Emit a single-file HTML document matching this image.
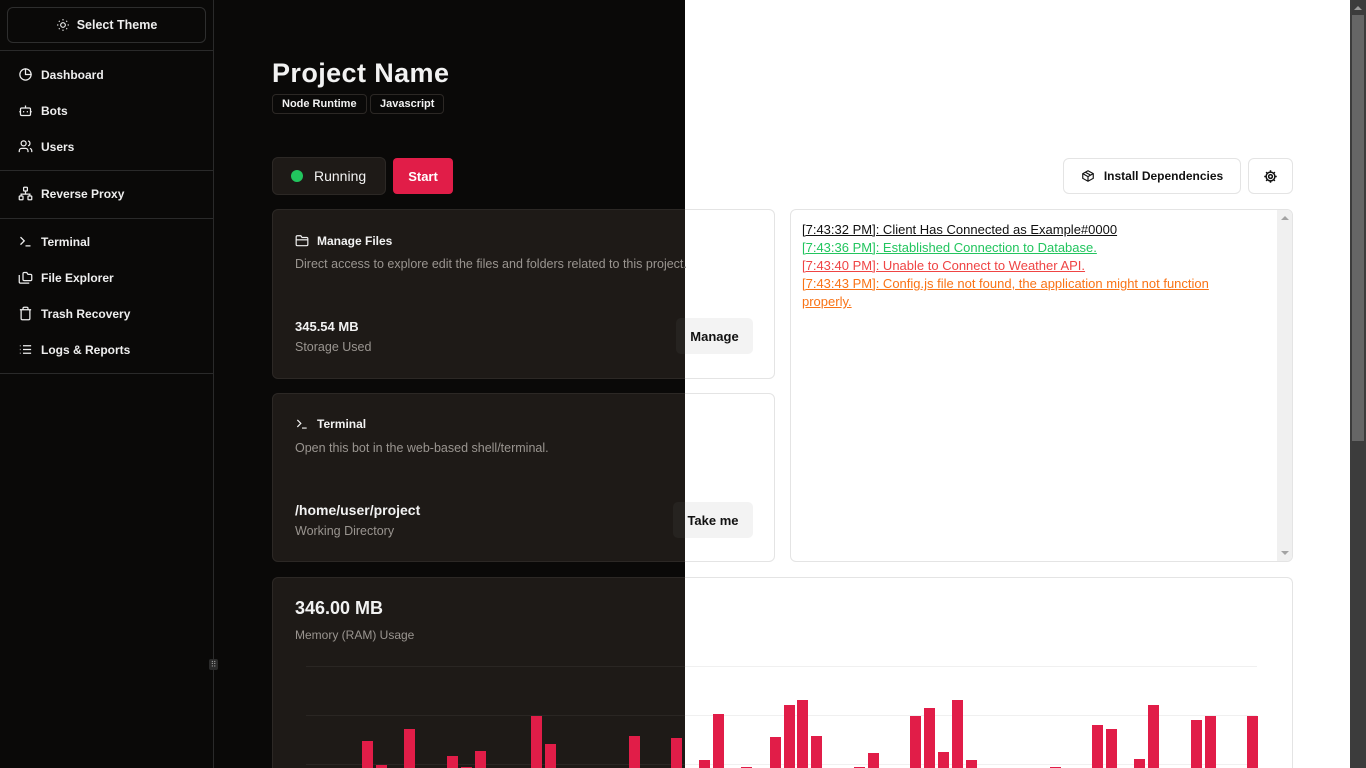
<!DOCTYPE html>
<html><head><meta charset="utf-8">
<style>
*{box-sizing:border-box;margin:0;padding:0}
html{overflow:hidden;height:768px;width:1366px}
body{width:1366px;height:768px;overflow:hidden;font-family:"Liberation Sans",sans-serif;position:relative;background:#0a0908}
.layer{position:absolute;left:0;top:0;width:1366px;height:768px;overflow:hidden}
.dark{background:#0a0908;color:#f2f2f2;--card:#1e1a17;--bd:#2c2825;--mut:#9a9590;--btn:#262320;--grid:#2a2623;--badge:#0a0908}
.light{background:#fff;color:#111;clip-path:inset(0 16px 0 685px);--card:#fff;--bd:#e4e4e4;--mut:#6b6b6b;--btn:#f3f3f3;--grid:#f0f0f0;--badge:#fff}
.a{position:absolute}
.box{position:absolute;border:1px solid var(--bd);border-radius:6px;background:var(--card)}
.title{left:272px;top:58px;font-size:27px;font-weight:bold;letter-spacing:.4px}
.badge{position:absolute;top:94px;height:20px;border:1px solid var(--bd);border-radius:4px;font-size:11px;font-weight:bold;line-height:18px;padding:0 9px;background:var(--badge)}
.btxt{font-size:13px;font-weight:bold}
.mut{color:var(--mut);font-size:12.5px}
.btn{position:absolute;background:var(--btn);border-radius:5px;font-size:13px;font-weight:bold;display:flex;align-items:center;justify-content:center}
.log{position:absolute;left:802px;font-size:13px;text-decoration:underline;line-height:18px}
.sb{position:absolute;left:0;top:0;width:214px;height:768px;border-right:1px solid #2a2a2a;background:#0a0908;color:#eee}
.sb .it{position:absolute;left:18px;font-size:12px;font-weight:bold;display:flex;align-items:center;gap:8px}
.sb .it svg{width:15px;height:15px}
.hr{position:absolute;left:0;width:213px;height:1px;background:#2a2a2a}
</style></head><body>

<div class="layer dark">
<div class="sb">
 <div class="a" style="left:7px;top:7px;width:199px;height:36px;border:1px solid #2e2e2e;border-radius:6px;display:flex;align-items:center;justify-content:center;gap:7px;font-size:12.5px;font-weight:bold">
  <svg width="14" height="14" viewBox="0 0 24 24" fill="none" stroke="#eee" stroke-width="2"><circle cx="12" cy="12" r="4"/><path d="M12 2v2M12 20v2M4.9 4.9l1.4 1.4M17.7 17.7l1.4 1.4M2 12h2M20 12h2M4.9 19.1l1.4-1.4M17.7 6.3l1.4-1.4"/></svg>Select Theme</div>
 <div class="hr" style="top:50px"></div>
 <div class="it" style="top:67px"><svg viewBox="0 0 24 24" fill="none" stroke="#eee" stroke-width="2"><path d="M21 12A9 9 0 1 1 12 3"/><path d="M21 12A9 9 0 0 0 12 3v9z"/></svg>Dashboard</div>
 <div class="it" style="top:103px"><svg viewBox="0 0 24 24" fill="none" stroke="#eee" stroke-width="2"><rect x="4" y="8" width="16" height="12" rx="2"/><path d="M12 8V4M2 14h2M20 14h2M9 13v2M15 13v2"/></svg>Bots</div>
 <div class="it" style="top:139px"><svg viewBox="0 0 24 24" fill="none" stroke="#eee" stroke-width="2"><circle cx="9" cy="7" r="4"/><path d="M2 21v-2a4 4 0 0 1 4-4h6a4 4 0 0 1 4 4v2M16 3.1a4 4 0 0 1 0 7.8M22 21v-2a4 4 0 0 0-3-3.9"/></svg>Users</div>
 <div class="hr" style="top:170px"></div>
 <div class="it" style="top:186px"><svg viewBox="0 0 24 24" fill="none" stroke="#eee" stroke-width="2"><rect x="9" y="2" width="6" height="6" rx="1"/><rect x="2" y="16" width="6" height="6" rx="1"/><rect x="16" y="16" width="6" height="6" rx="1"/><path d="M5 16v-3h14v3M12 8v5"/></svg>Reverse Proxy</div>
 <div class="hr" style="top:218px"></div>
 <div class="it" style="top:234px"><svg viewBox="0 0 24 24" fill="none" stroke="#eee" stroke-width="2"><path d="M4 17l6-6-6-6M12 19h8"/></svg>Terminal</div>
 <div class="it" style="top:270px"><svg viewBox="0 0 24 24" fill="none" stroke="#eee" stroke-width="2"><path d="M20 17a2 2 0 0 0 2-2V9a2 2 0 0 0-2-2h-4l-2-3h-4a2 2 0 0 0-2 2v9a2 2 0 0 0 2 2z"/><path d="M2 8v11a2 2 0 0 0 2 2h14"/></svg>File Explorer</div>
 <div class="it" style="top:306px"><svg viewBox="0 0 24 24" fill="none" stroke="#eee" stroke-width="2"><path d="M3 6h18M19 6v14a2 2 0 0 1-2 2H7a2 2 0 0 1-2-2V6M8 6V4a2 2 0 0 1 2-2h4a2 2 0 0 1 2 2v2"/></svg>Trash Recovery</div>
 <div class="it" style="top:342px"><svg viewBox="0 0 24 24" fill="none" stroke="#eee" stroke-width="2"><path d="M3 6h1M3 12h1M3 18h1M8 6h13M8 12h13M8 18h13"/></svg>Logs &amp; Reports</div>
 <div class="hr" style="top:373px"></div>
 <div class="a" style="left:209px;top:659px;width:9px;height:11px;background:#2a2a2a;border-radius:2px;color:#999;font-size:8px;text-align:center;line-height:11px">⠿</div>
</div>
<div class="a title">Project Name</div>
<div class="badge" style="left:272px">Node Runtime</div>
<div class="badge" style="left:370px">Javascript</div>
<div class="box" style="left:272px;top:157px;width:114px;height:38px;display:flex;align-items:center;font-size:14px"><span style="width:12px;height:12px;border-radius:50%;background:#22c55e;margin-left:18px;margin-right:11px"></span>Running</div>
<div class="btn" style="left:393px;top:158px;width:60px;height:36px;background:#e11d48;color:#fff;border-radius:4px">Start</div>
<div class="box" style="left:1063px;top:158px;width:178px;height:36px;display:flex;align-items:center;justify-content:center;gap:9px;font-size:12px;font-weight:bold"><svg width="14" height="14" viewBox="0 0 24 24" fill="none" stroke="currentColor" stroke-width="2"><path d="M21 8l-9-5-9 5v8l9 5 9-5z"/><path d="M3 8l9 5 9-5M12 13v8M7.5 5.5l9 5"/></svg>Install Dependencies</div>
<div class="box" style="left:1248px;top:158px;width:45px;height:36px;display:flex;align-items:center;justify-content:center"><svg width="15" height="15" viewBox="0 0 24 24" fill="none" stroke="currentColor" stroke-width="2.4"><circle cx="12" cy="12" r="3"/><circle cx="12" cy="12" r="7"/><path d="M12 2v3M12 19v3M2 12h3M19 12h3M5 5l2 2M17 17l2 2M5 19l2-2M17 7l2-2"/></svg></div>

<div class="box" style="left:272px;top:209px;width:503px;height:170px"></div>
<div class="a btxt" style="left:295px;top:234px;display:flex;align-items:center;gap:8px;font-size:12px"><svg width="14" height="14" viewBox="0 0 24 24" fill="none" stroke="currentColor" stroke-width="2"><path d="M4 20h16a2 2 0 0 0 2-2V8a2 2 0 0 0-2-2h-8l-2-3H4a2 2 0 0 0-2 2v13a2 2 0 0 0 2 2z"/><path d="M2 10h20"/></svg>Manage Files</div>
<div class="a mut" style="left:295px;top:257px">Direct access to explore edit the files and folders related to this project.</div>
<div class="a btxt" style="left:295px;top:319px">345.54 MB</div>
<div class="a mut" style="left:295px;top:340px">Storage Used</div>
<div class="btn" style="left:676px;top:318px;width:77px;height:36px">Manage</div>

<div class="box" style="left:272px;top:393px;width:503px;height:169px"></div>
<div class="a btxt" style="left:295px;top:417px;display:flex;align-items:center;gap:8px;font-size:12px"><svg width="14" height="14" viewBox="0 0 24 24" fill="none" stroke="currentColor" stroke-width="2"><path d="M4 17l6-6-6-6M12 19h8"/></svg>Terminal</div>
<div class="a mut" style="left:295px;top:441px">Open this bot in the web-based shell/terminal.</div>
<div class="a btxt" style="left:295px;top:502px;font-size:14px">/home/user/project</div>
<div class="a mut" style="left:295px;top:524px">Working Directory</div>
<div class="btn" style="left:673px;top:502px;width:80px;height:36px">Take me</div>

<div class="box" style="left:790px;top:209px;width:503px;height:353px;overflow:hidden"><div class="a" style="right:0;top:0;width:15px;height:100%;background:#f0f0f0"><div class="a" style="left:4px;top:6px;border:4px solid transparent;border-bottom:4px solid #a3a3a3;border-top:0"></div><div class="a" style="left:4px;bottom:6px;border:4px solid transparent;border-top:4px solid #a3a3a3;border-bottom:0"></div></div></div>
<div class="log" style="top:221px;color:#111">[7:43:32 PM]: Client Has Connected as Example#0000</div>
<div class="log" style="top:239px;color:#22c55e">[7:43:36 PM]: Established Connection to Database.</div>
<div class="log" style="top:257px;color:#ef4444">[7:43:40 PM]: Unable to Connect to Weather API.</div>
<div class="log" style="top:275px;color:#f97316;width:435px">[7:43:43 PM]: Config.js file not found, the application might not function properly.</div>

<div class="box" style="left:272px;top:577px;width:1021px;height:191px;border-bottom:0;border-radius:6px 6px 0 0"></div>
<div class="a" style="left:295px;top:598px;font-size:18px;font-weight:bold">346.00 MB</div>
<div class="a mut" style="left:295px;top:628px;font-size:12px">Memory (RAM) Usage</div>
<svg class="a" style="left:0;top:0" width="1366" height="768">
<g fill="var(--grid)"><rect x="306" y="666" width="951" height="1"/><rect x="306" y="715" width="951" height="1"/><rect x="306" y="764" width="951" height="1"/></g>
<g fill="#e11d48">
<rect x="362" y="741" width="11" height="27"/><rect x="376" y="765" width="11" height="3"/><rect x="404" y="729" width="11" height="39"/><rect x="447" y="756" width="11" height="12"/><rect x="461" y="767" width="11" height="1"/><rect x="475" y="751" width="11" height="17"/><rect x="531" y="716" width="11" height="52"/><rect x="545" y="744" width="11" height="24"/><rect x="629" y="736" width="11" height="32"/><rect x="671" y="738" width="11" height="30"/><rect x="699" y="760" width="11" height="8"/><rect x="713" y="714" width="11" height="54"/><rect x="741" y="767" width="11" height="1"/><rect x="770" y="737" width="11" height="31"/><rect x="784" y="705" width="11" height="63"/><rect x="797" y="700" width="11" height="68"/><rect x="811" y="736" width="11" height="32"/><rect x="854" y="767" width="11" height="1"/><rect x="868" y="753" width="11" height="15"/><rect x="910" y="716" width="11" height="52"/><rect x="924" y="708" width="11" height="60"/><rect x="938" y="752" width="11" height="16"/><rect x="952" y="700" width="11" height="68"/><rect x="966" y="760" width="11" height="8"/><rect x="1050" y="767" width="11" height="1"/><rect x="1092" y="725" width="11" height="43"/><rect x="1106" y="729" width="11" height="39"/><rect x="1134" y="759" width="11" height="9"/><rect x="1148" y="705" width="11" height="63"/><rect x="1191" y="720" width="11" height="48"/><rect x="1205" y="716" width="11" height="52"/><rect x="1247" y="716" width="11" height="52"/>
</g></svg>
</div>

<div class="layer light">
<div class="a title">Project Name</div>
<div class="badge" style="left:272px">Node Runtime</div>
<div class="badge" style="left:370px">Javascript</div>
<div class="box" style="left:272px;top:157px;width:114px;height:38px;display:flex;align-items:center;font-size:14px"><span style="width:12px;height:12px;border-radius:50%;background:#22c55e;margin-left:18px;margin-right:11px"></span>Running</div>
<div class="btn" style="left:393px;top:158px;width:60px;height:36px;background:#e11d48;color:#fff;border-radius:4px">Start</div>
<div class="box" style="left:1063px;top:158px;width:178px;height:36px;display:flex;align-items:center;justify-content:center;gap:9px;font-size:12px;font-weight:bold"><svg width="14" height="14" viewBox="0 0 24 24" fill="none" stroke="currentColor" stroke-width="2"><path d="M21 8l-9-5-9 5v8l9 5 9-5z"/><path d="M3 8l9 5 9-5M12 13v8M7.5 5.5l9 5"/></svg>Install Dependencies</div>
<div class="box" style="left:1248px;top:158px;width:45px;height:36px;display:flex;align-items:center;justify-content:center"><svg width="15" height="15" viewBox="0 0 24 24" fill="none" stroke="currentColor" stroke-width="2.4"><circle cx="12" cy="12" r="3"/><circle cx="12" cy="12" r="7"/><path d="M12 2v3M12 19v3M2 12h3M19 12h3M5 5l2 2M17 17l2 2M5 19l2-2M17 7l2-2"/></svg></div>

<div class="box" style="left:272px;top:209px;width:503px;height:170px"></div>
<div class="a btxt" style="left:295px;top:234px;display:flex;align-items:center;gap:8px;font-size:12px"><svg width="14" height="14" viewBox="0 0 24 24" fill="none" stroke="currentColor" stroke-width="2"><path d="M4 20h16a2 2 0 0 0 2-2V8a2 2 0 0 0-2-2h-8l-2-3H4a2 2 0 0 0-2 2v13a2 2 0 0 0 2 2z"/><path d="M2 10h20"/></svg>Manage Files</div>
<div class="a mut" style="left:295px;top:257px">Direct access to explore edit the files and folders related to this project.</div>
<div class="a btxt" style="left:295px;top:319px">345.54 MB</div>
<div class="a mut" style="left:295px;top:340px">Storage Used</div>
<div class="btn" style="left:676px;top:318px;width:77px;height:36px">Manage</div>

<div class="box" style="left:272px;top:393px;width:503px;height:169px"></div>
<div class="a btxt" style="left:295px;top:417px;display:flex;align-items:center;gap:8px;font-size:12px"><svg width="14" height="14" viewBox="0 0 24 24" fill="none" stroke="currentColor" stroke-width="2"><path d="M4 17l6-6-6-6M12 19h8"/></svg>Terminal</div>
<div class="a mut" style="left:295px;top:441px">Open this bot in the web-based shell/terminal.</div>
<div class="a btxt" style="left:295px;top:502px;font-size:14px">/home/user/project</div>
<div class="a mut" style="left:295px;top:524px">Working Directory</div>
<div class="btn" style="left:673px;top:502px;width:80px;height:36px">Take me</div>

<div class="box" style="left:790px;top:209px;width:503px;height:353px;overflow:hidden"><div class="a" style="right:0;top:0;width:15px;height:100%;background:#f0f0f0"><div class="a" style="left:4px;top:6px;border:4px solid transparent;border-bottom:4px solid #a3a3a3;border-top:0"></div><div class="a" style="left:4px;bottom:6px;border:4px solid transparent;border-top:4px solid #a3a3a3;border-bottom:0"></div></div></div>
<div class="log" style="top:221px;color:#111">[7:43:32 PM]: Client Has Connected as Example#0000</div>
<div class="log" style="top:239px;color:#22c55e">[7:43:36 PM]: Established Connection to Database.</div>
<div class="log" style="top:257px;color:#ef4444">[7:43:40 PM]: Unable to Connect to Weather API.</div>
<div class="log" style="top:275px;color:#f97316;width:435px">[7:43:43 PM]: Config.js file not found, the application might not function properly.</div>

<div class="box" style="left:272px;top:577px;width:1021px;height:191px;border-bottom:0;border-radius:6px 6px 0 0"></div>
<div class="a" style="left:295px;top:598px;font-size:18px;font-weight:bold">346.00 MB</div>
<div class="a mut" style="left:295px;top:628px;font-size:12px">Memory (RAM) Usage</div>
<svg class="a" style="left:0;top:0" width="1366" height="768">
<g fill="var(--grid)"><rect x="306" y="666" width="951" height="1"/><rect x="306" y="715" width="951" height="1"/><rect x="306" y="764" width="951" height="1"/></g>
<g fill="#e11d48">
<rect x="362" y="741" width="11" height="27"/><rect x="376" y="765" width="11" height="3"/><rect x="404" y="729" width="11" height="39"/><rect x="447" y="756" width="11" height="12"/><rect x="461" y="767" width="11" height="1"/><rect x="475" y="751" width="11" height="17"/><rect x="531" y="716" width="11" height="52"/><rect x="545" y="744" width="11" height="24"/><rect x="629" y="736" width="11" height="32"/><rect x="671" y="738" width="11" height="30"/><rect x="699" y="760" width="11" height="8"/><rect x="713" y="714" width="11" height="54"/><rect x="741" y="767" width="11" height="1"/><rect x="770" y="737" width="11" height="31"/><rect x="784" y="705" width="11" height="63"/><rect x="797" y="700" width="11" height="68"/><rect x="811" y="736" width="11" height="32"/><rect x="854" y="767" width="11" height="1"/><rect x="868" y="753" width="11" height="15"/><rect x="910" y="716" width="11" height="52"/><rect x="924" y="708" width="11" height="60"/><rect x="938" y="752" width="11" height="16"/><rect x="952" y="700" width="11" height="68"/><rect x="966" y="760" width="11" height="8"/><rect x="1050" y="767" width="11" height="1"/><rect x="1092" y="725" width="11" height="43"/><rect x="1106" y="729" width="11" height="39"/><rect x="1134" y="759" width="11" height="9"/><rect x="1148" y="705" width="11" height="63"/><rect x="1191" y="720" width="11" height="48"/><rect x="1205" y="716" width="11" height="52"/><rect x="1247" y="716" width="11" height="52"/>
</g></svg>
</div>

<div class="a" style="left:1350px;top:0;width:16px;height:768px;background:#3c3c3c">
 <div class="a" style="left:4px;top:6px;border:4px solid transparent;border-bottom:4px solid #9a9a9a;border-top:0"></div>
 <div class="a" style="left:2px;top:15px;width:12px;height:426px;background:#666"></div>
</div>
</body></html>
